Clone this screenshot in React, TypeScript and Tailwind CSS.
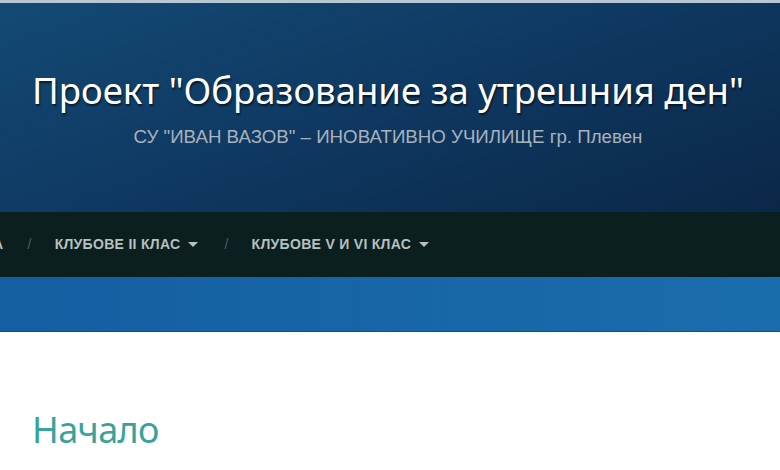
import React from 'react';

const NAV_ITEMS = [
  { label: 'КЛУБОВЕ II КЛАС', dropdown: true },
  { label: 'КЛУБОВЕ V И VI КЛАС', dropdown: true },
];

const Caret = () => (
  <svg width="10" height="6" viewBox="0 0 10 6" className="ml-[8px] mt-[1px]">
    <path d="M0 0 L10 0 L5 5 Z" fill="#b8c0c1" />
  </svg>
);

const App: React.FC = () => {
  return (
    <div className="w-[780px] h-[470px] overflow-hidden bg-white">
      <div className="h-[3px] bg-[#b7c8d4]" />

      {/* header */}
      <header className="h-[209px] flex flex-col items-center bg-[linear-gradient(160deg,#134a74_0%,#0f3a63_45%,#0b2748_100%)]">
        <h1 className="mt-[65px] -ml-[4px] text-white text-[36.5px] leading-[44px] font-['Noto_Sans',sans-serif] [text-shadow:1px_2px_2px_rgba(0,0,0,0.6)]">
          Проект "Образование за утрешния ден"
        </h1>
        <p className="mt-[14px] -ml-[4px] text-[#a8b2bc] text-[18.7px] leading-[22px] font-['Liberation_Sans',Arial,sans-serif]">
          СУ "ИВАН ВАЗОВ" – ИНОВАТИВНО УЧИЛИЩЕ гр. Плевен
        </p>
      </header>

      {/* nav */}
      <nav className="h-[65px] bg-[#0a1f1e] flex items-center font-['Liberation_Sans',Arial,sans-serif] text-[14px] font-bold text-[#b8c0c1] tracking-[0.3px]">
        <span className="-ml-[7px]">А</span>
        {NAV_ITEMS.map((item) => (
          <React.Fragment key={item.label}>
            <span className="ml-[24px] mr-[23px] font-normal text-[#4d5f60]">/</span>
            <span className="flex items-center mr-[2px]">
              {item.label}
              {item.dropdown && <Caret />}
            </span>
          </React.Fragment>
        ))}
      </nav>

      {/* blue band */}
      <div className="h-[55px] bg-[linear-gradient(90deg,#145ea2_0%,#1a6dac_100%)] border-b border-[#0d4f94]" />

      <main className="px-[32px] pt-[76px]">
        <h2 className="text-[#38a39b] text-[36px] leading-[44px] tracking-[-0.6px] font-['Noto_Sans',sans-serif]">Начало</h2>
      </main>
    </div>
  );
};

export default App;
